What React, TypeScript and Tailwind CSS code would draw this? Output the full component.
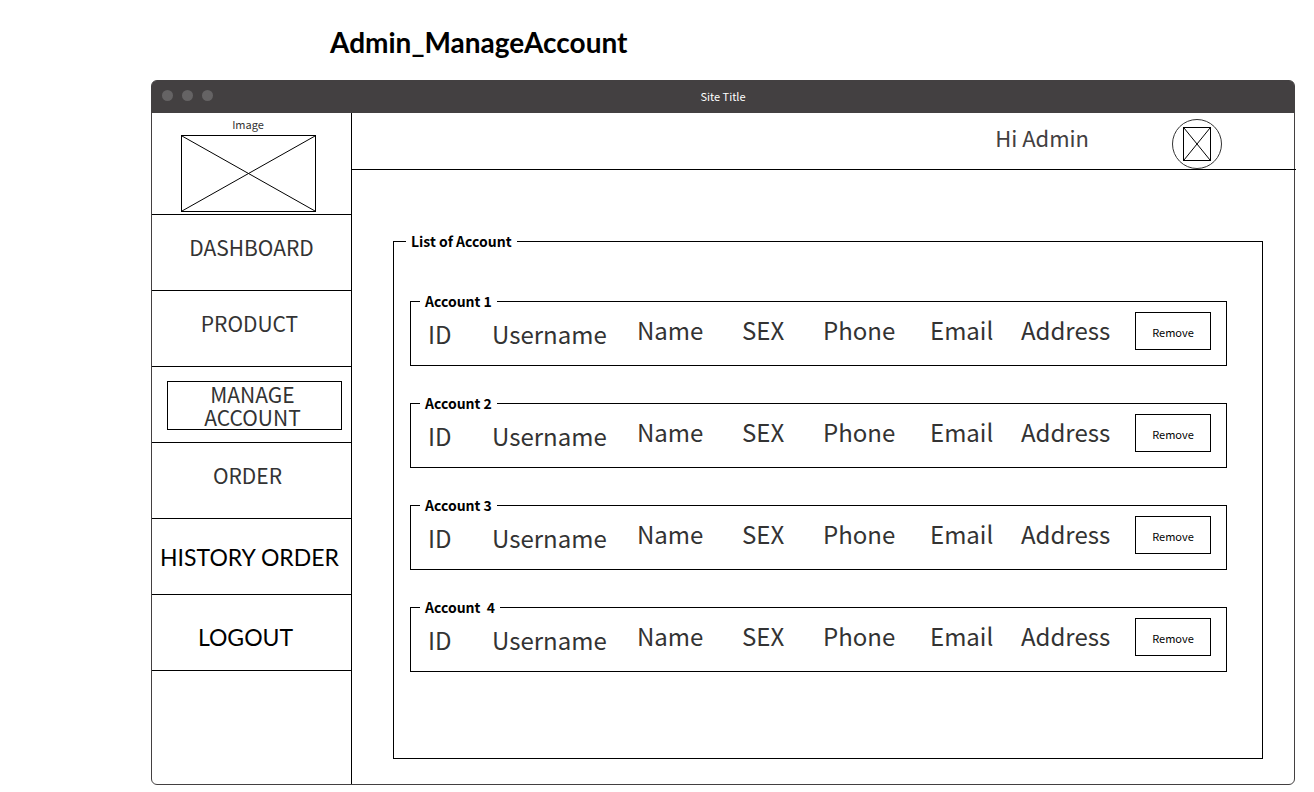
const accounts = ["Account 1", "Account 2", "Account 3", "Account  4"];

function Placeholder({ className }: { className: string }) {
  return (
    <svg className={className} viewBox="0 0 100 100" preserveAspectRatio="none" aria-hidden="true">
      <path
        d="M0 0L100 100M100 0L0 100"
        stroke="#000"
        strokeWidth="1"
        vectorEffect="non-scaling-stroke"
        fill="none"
      />
    </svg>
  );
}

const navRow = "flex h-[76px] justify-center border-b border-black";
const navText = "pt-4 text-[21px] leading-8 text-[#333]";
const navPlain = "font-[Lato,sans-serif] text-[23px] leading-9 text-black";

function Sidebar() {
  return (
    <aside className="w-[200px] shrink-0 border-r border-black">
      <div className="flex h-[102px] flex-col items-center border-b border-black pr-[7px]">
        <span className="text-[11px] leading-[22px] text-[#333]">Image</span>
        <div className="h-[77px] w-[135px] shrink-0 border border-black">
          <Placeholder className="h-full w-full" />
        </div>
      </div>
      <nav className="flex flex-col">
        <div className={navRow}>
          <a href="#dashboard" className={navText}>DASHBOARD</a>
        </div>
        <div className={`${navRow} pr-1`}>
          <a href="#product" className={navText}>PRODUCT</a>
        </div>
        <div className="h-[76px] border-b border-black pt-[14px] pr-[9px] pl-[15px]">
          <a
            href="#manage-account"
            aria-current="page"
            className="block h-[49px] border border-black pt-px pr-8 pl-7 text-center text-[21px] leading-[23px] text-[#333]"
          >
            MANAGE ACCOUNT
          </a>
        </div>
        <div className={`${navRow} pr-2`}>
          <a href="#order" className={navText}>ORDER</a>
        </div>
        <div className={`${navRow} pr-1`}>
          <a href="#history" className={`${navPlain} pt-5`}>HISTORY ORDER</a>
        </div>
        <div className={`${navRow} pr-3`}>
          <a href="#logout" className={`${navPlain} pt-6`}>LOGOUT</a>
        </div>
      </nav>
    </aside>
  );
}

function AccountRow({ title }: { title: string }) {
  return (
    <fieldset className="h-[74px] min-w-0 border border-black pl-[9px]">
      <legend className="px-[5px] text-[14px] leading-[19px] font-bold whitespace-pre text-black">
        {title}
      </legend>
      <div className="grid grid-cols-[64fr_145fr_105fr_81fr_107fr_91fr_114fr_91fr] pl-2 text-[24px] leading-[38px] text-[#333]">
        <span className="pt-1">ID</span>
        <span className="pt-1">Username</span>
        <span>Name</span>
        <span>SEX</span>
        <span>Phone</span>
        <span>Email</span>
        <span>Address</span>
        <button
          type="button"
          className="mt-px mr-[15px] h-[38px] border border-black pb-[2px] text-[11px] text-black"
        >
          Remove
        </button>
      </div>
    </fieldset>
  );
}

export default function App() {
  return (
    <div className="min-h-screen bg-white pr-[19px] pb-[7px] pl-[151px] font-['Noto_Sans_CJK_SC',sans-serif]">
      <h1 className="h-20 pt-6 pl-[179px] font-[Lato,sans-serif] text-[28px] leading-9 font-bold text-black">
        Admin_ManageAccount
      </h1>
      <div className="rounded-md border border-[#434041]">
        <div className="grid h-8 grid-cols-3 items-center rounded-t-sm bg-[#434041] pb-[3px]">
          <div className="flex gap-[9px] pl-[10px]">
            <span className="size-[11px] rounded-full bg-[#656364]" />
            <span className="size-[11px] rounded-full bg-[#656364]" />
            <span className="size-[11px] rounded-full bg-[#656364]" />
          </div>
          <span className="text-center text-[11px] leading-4 text-white">Site Title</span>
        </div>
        <div className="flex">
          <Sidebar />
          <div className="min-w-0 flex-1">
            <header className="-mr-[2px] flex h-[57px] justify-end border-b border-black pt-[6px] pr-[74px]">
              <span className="mr-[83px] text-[22px] leading-9 text-[#434041]">Hi Admin</span>
              <div className="flex size-[50px] items-center justify-center rounded-full border border-[#333]">
                <div className="h-[34px] w-[28px] border border-black">
                  <Placeholder className="h-full w-full" />
                </div>
              </div>
            </header>
            <main className="pt-[62px] pr-[31px] pb-[25px] pl-[41px]">
              <fieldset className="h-[527px] min-w-0 border border-black pr-[35px] pl-3">
                <legend className="px-[5px] text-[14px] leading-[19px] font-bold text-black">
                  List of Account
                </legend>
                <div className="flex flex-col gap-7 pt-[41px] pl-1">
                  {accounts.map((title) => (
                    <AccountRow key={title} title={title} />
                  ))}
                </div>
              </fieldset>
            </main>
          </div>
        </div>
      </div>
    </div>
  );
}
